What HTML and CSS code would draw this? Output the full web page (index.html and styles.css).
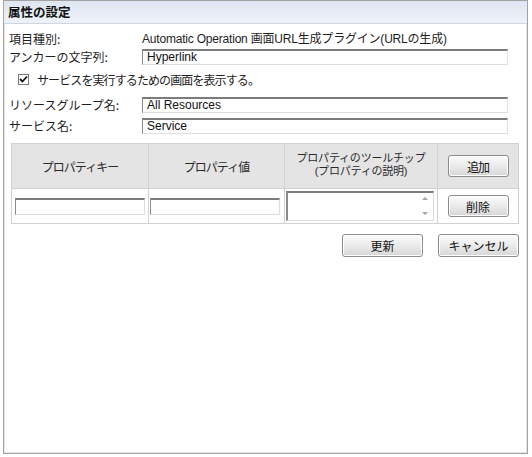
FILE: index.html
```html
<!DOCTYPE html>
<html lang="ja">
<head>
<meta charset="utf-8">
<title>属性の設定</title>
<link rel="stylesheet" href="styles.css">
</head>
<body>
<div class="panel">
  <div class="title">属性の設定</div>
  <div class="content">
    <div class="row row-type">
      <span class="label">項目種別:</span>
      <span class="value">Automatic Operation 画面URL生成プラグイン(URLの生成)</span>
    </div>
    <div class="row row-anchor">
      <span class="label">アンカーの文字列:</span>
      <div class="field"><span class="field-text">Hyperlink</span></div>
    </div>
    <div class="row row-check">
      <span class="checkbox"><svg width="9" height="9" viewBox="0 0 9 9"><path d="M1 4 L3.5 6.5 L8 1.5" fill="none" stroke="#111" stroke-width="1.8"/></svg></span>
      <span class="check-label">サービスを実行するための画面を表示する。</span>
    </div>
    <div class="row row-group">
      <span class="label">リソースグループ名:</span>
      <div class="field"><span class="field-text">All Resources</span></div>
    </div>
    <div class="row row-service">
      <span class="label">サービス名:</span>
      <div class="field"><span class="field-text">Service</span></div>
    </div>

    <div class="grid">
      <div class="cell head">プロパティキー</div>
      <div class="cell head">プロパティ値</div>
      <div class="cell head two-line"><span class="line">プロパティのツールチップ</span><span class="line">(プロパティの説明)</span></div>
      <div class="cell head"><span class="btn btn-small">追加</span></div>
      <div class="cell data c1"><div class="small-field"></div></div>
      <div class="cell data c2"><div class="small-field"></div></div>
      <div class="cell data c3">
        <div class="area">
          <div class="spin">
            <span class="arrow up"></span>
            <span class="arrow down"></span>
          </div>
        </div>
      </div>
      <div class="cell data"><span class="btn btn-small">削除</span></div>
    </div>

    <div class="actions">
      <span class="btn btn-large">更新</span>
      <span class="btn btn-large">キャンセル</span>
    </div>
  </div>
</div>
</body>
</html>
```

FILE: styles.css
```css
html, body {
  margin: 0;
  padding: 0;
  background: #ffffff;
}

body {
  width: 532px;
  height: 457px;
  overflow: hidden;
  font-family: "Liberation Sans", "Noto Sans CJK JP", sans-serif;
  font-size: 12px;
  color: #1e1e1e;
}

.panel {
  box-sizing: border-box;
  margin-left: 3px;
  width: 525px;
  height: 454px;
  border: 1px solid #a2a2a2;
  box-shadow: inset 0 0 0 1px #e6e6e6;
  background: #ffffff;
}

.title {
  height: 22px;
  line-height: 22px;
  padding-left: 4px;
  font-family: "Noto Sans CJK JP", sans-serif;
  font-weight: bold;
  font-size: 12.5px;
  color: #111;
  background: linear-gradient(#dfe6f1, #eef2f8);
  border-bottom: 1px solid #cfd6e0;
}

.content {
  display: flex;
  flex-direction: column;
}

.row {
  display: flex;
  align-items: center;
  height: 16px;
}

.label {
  box-sizing: border-box;
  width: 138px;
  padding-left: 5px;
  font-family: "Noto Sans CJK JP", sans-serif;
  font-size: 12px;
  line-height: 16px;
  white-space: nowrap;
}

.value {
  font-size: 12px;
  line-height: 16px;
  white-space: nowrap;
  letter-spacing: -0.2px;
}

.row-type { margin-top: 7px; }
.row-anchor { margin-top: 2px; }
.row-check { margin-top: 5px; height: 19px; }
.row-group { margin-top: 8px; }
.row-service { margin-top: 5px; }

.field {
  box-sizing: border-box;
  width: 366px;
  height: 16px;
  border-top: 2px solid #7c7c7c;
  border-left: 1px solid #8a8a8a;
  border-right: 1px solid #dedede;
  border-bottom: 1px solid #dedede;
  display: flex;
  align-items: center;
  padding-left: 4px;
}

.field-text {
  font-size: 12px;
  line-height: 13px;
  color: #111;
}

.checkbox {
  box-sizing: border-box;
  width: 11px;
  height: 11px;
  margin-left: 14px;
  border: 1px solid #7a7a7a;
  background: #fff;
  display: flex;
  align-items: center;
  justify-content: center;
}

.check-label {
  margin-left: 8px;
  font-family: "Noto Sans CJK JP", sans-serif;
  font-size: 12px;
  letter-spacing: -0.9px;
  white-space: nowrap;
}

.grid {
  margin-top: 9px;
  margin-left: 7px;
  display: grid;
  grid-template-columns: 137px 136px 153px 81px;
  width: 508px;
  box-sizing: border-box;
  border-left: 1px solid #d2d2d2;
  border-top: 1px solid #d2d2d2;
}

.cell {
  box-sizing: border-box;
  border-right: 1px solid #d2d2d2;
  border-bottom: 1px solid #d2d2d2;
  display: flex;
  align-items: center;
  justify-content: center;
}

.head {
  height: 45px;
  background: #e4e4e4;
  font-family: "Noto Sans CJK JP", sans-serif;
  font-size: 12px;
  color: #2a2a2a;
  letter-spacing: -1px;
}

.two-line {
  flex-direction: column;
  text-align: center;
  padding-bottom: 2px;
  font-family: "Liberation Sans", "Noto Sans CJK JP", sans-serif;
  font-size: 11px;
  letter-spacing: -0.2px;
}

.line {
  display: block;
  line-height: 13px;
  white-space: nowrap;
}

.data {
  height: 35px;
  background: #fff;
}

.c1 { justify-content: flex-start; padding-left: 3px; }
.c2 { justify-content: flex-start; padding-left: 1px; }
.c3 { justify-content: flex-start; padding-left: 1px; }

.small-field {
  box-sizing: border-box;
  width: 130px;
  height: 17px;
  border-top: 2px solid #7c7c7c;
  border-left: 1px solid #8a8a8a;
  border-right: 1px solid #dedede;
  border-bottom: 1px solid #dedede;
}

.area {
  box-sizing: border-box;
  width: 148px;
  height: 30px;
  border-top: 2px solid #7c7c7c;
  border-left: 2px solid #8a8a8a;
  border-right: 1px solid #dedede;
  border-bottom: 1px solid #dedede;
  display: flex;
  justify-content: flex-end;
}

.spin {
  width: 16px;
  display: flex;
  flex-direction: column;
  justify-content: space-between;
  align-items: center;
  padding: 4px 0 5px;
}

.arrow {
  width: 0;
  height: 0;
  border-left: 3px solid transparent;
  border-right: 3px solid transparent;
}

.arrow.up { border-bottom: 3px solid #a8a8a8; }
.arrow.down { border-top: 3px solid #a8a8a8; }

.btn {
  box-sizing: border-box;
  display: flex;
  align-items: center;
  justify-content: center;
  border: 1px solid #8c8c8c;
  border-radius: 3px;
  background: linear-gradient(#fbfbfb, #e9e9e9 55%, #d6d6d6);
  box-shadow: inset 0 0 0 1px #ffffff;
  font-family: "Noto Sans CJK JP", sans-serif;
  font-size: 12px;
  color: #111;
}

.btn-small {
  width: 61px;
  height: 22px;
}

.btn-large {
  width: 81px;
  height: 23px;
}

.actions {
  display: flex;
  justify-content: flex-end;
  gap: 15px;
  margin-top: 10px;
  padding-right: 8px;
}
```
